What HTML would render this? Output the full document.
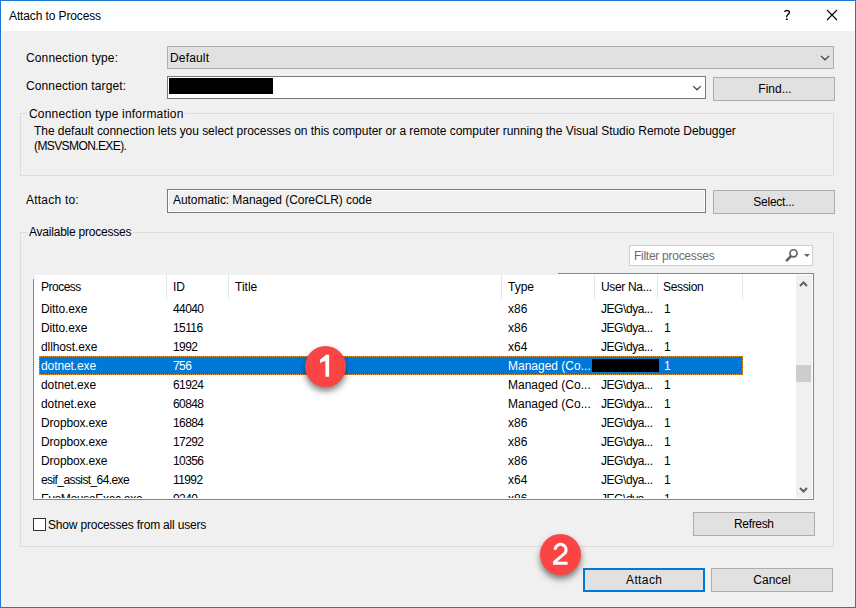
<!DOCTYPE html>
<html><head><meta charset="utf-8">
<style>
*{box-sizing:border-box;margin:0;padding:0}
html,body{width:856px;height:608px;overflow:hidden;background:#f0f0f0}
body{position:relative;font-family:"Liberation Sans",sans-serif;font-size:12px;color:#000}
.a{position:absolute}
.t{position:absolute;line-height:15px;white-space:nowrap}
</style></head><body>

<div class="a" style="left:0px;top:0px;width:856px;height:608px;background:#f0f0f0;border:1px solid #1a79d3"></div>
<div class="a" style="left:1px;top:1px;width:854px;height:30px;background:#fff"></div>
<div class="t" style="left:9px;top:9px;letter-spacing:-0.12px">Attach to Process</div>
<svg class="a" style="left:780px;top:6px" width="14" height="18" viewBox="0 0 14 18"><path d="M4.4 5.8C4.9 4.9 5.8 4.5 7 4.5C8.5 4.5 9.4 5.3 9.4 6.4C9.4 7.5 8.6 8.1 7.7 8.8C7 9.4 6.6 10 6.6 11.2" fill="none" stroke="#000" stroke-width="1.3"/><rect x="5.9" y="12.5" width="1.9" height="1.5" fill="#000"/></svg>
<svg class="a" style="left:826px;top:9px" width="12" height="12" viewBox="0 0 12 12"><path d="M1 1L11 11M11 1L1 11" stroke="#000" stroke-width="1.1"/></svg>
<div class="t" style="left:26px;top:51px;letter-spacing:0.13px">Connection type:</div>
<div class="a" style="left:167px;top:46px;width:667px;height:23px;background:#e1e1e1;border:1px solid #adadad"></div>
<div class="t" style="left:170px;top:51px;letter-spacing:0.17px">Default</div>
<svg class="a" style="left:815px;top:50px" width="20" height="14" viewBox="815 50 20 14"><path d="M820.9 55.9L825 59.8L829.1 55.9" fill="none" stroke="#404040" stroke-width="1.2"/></svg>
<div class="t" style="left:26px;top:79px;letter-spacing:0.12px">Connection target:</div>
<div class="a" style="left:167px;top:76px;width:539px;height:23px;background:#fff;border:1px solid #7a7a7a"></div>
<div class="a" style="left:169px;top:78px;width:104px;height:16px;background:#000"></div>
<svg class="a" style="left:688px;top:80px" width="18" height="14" viewBox="688 80 18 14"><path d="M693.2 86.1L697 89.8L700.8 86.1" fill="none" stroke="#404040" stroke-width="1.2"/></svg>
<div class="a" style="left:713px;top:77px;width:122px;height:24px;background:#e1e1e1;border:1px solid #adadad"></div><div class="t" style="left:714px;top:82px;width:122px;text-align:center">Find...</div>
<div class="a" style="left:20px;top:113px;width:814px;height:63px;border:1px solid #dcdcdc"></div>
<div class="a" style="left:27px;top:106px;width:158px;height:16px;background:#f0f0f0"></div>
<div class="t" style="left:29px;top:107px;letter-spacing:0.19px">Connection type information</div>
<div class="t" style="left:34px;top:124px;letter-spacing:-0.04px">The default connection lets you select processes on this computer or a remote computer running the Visual Studio Remote Debugger</div>
<div class="t" style="left:34px;top:139px;letter-spacing:-0.6px">(MSVSMON.EXE).</div>
<div class="t" style="left:26px;top:193px;letter-spacing:0.22px">Attach to:</div>
<div class="a" style="left:167px;top:189px;width:539px;height:24px;background:#f0f0f0;border:1px solid #7a7a7a;box-shadow:inset 0 0 0 1px #fff"></div>
<div class="t" style="left:173px;top:193px;letter-spacing:-0.06px">Automatic: Managed (CoreCLR) code</div>
<div class="a" style="left:713px;top:190px;width:122px;height:24px;background:#e1e1e1;border:1px solid #adadad"></div><div class="t" style="left:713px;top:195px;width:122px;text-align:center;letter-spacing:-0.25px;text-indent:-0.25px">Select...</div>
<div class="a" style="left:20px;top:232px;width:814px;height:315px;border:1px solid #dcdcdc"></div>
<div class="a" style="left:27px;top:224px;width:106px;height:17px;background:#f0f0f0"></div>
<div class="t" style="left:29px;top:225px;letter-spacing:-0.22px">Available processes</div>
<div class="a" style="left:629px;top:245px;width:184px;height:21px;background:#fff;border:1px solid #cccedb"></div>
<div class="t" style="left:634px;top:249px;letter-spacing:-0.27px;color:#6d6d6d">Filter processes</div>
<svg class="a" style="left:784px;top:247px" width="14" height="16" viewBox="0 0 14 16"><circle cx="9.5" cy="6.3" r="3.6" fill="none" stroke="#616161" stroke-width="1.6"/><path d="M7.2 8.8L2.1 14.1" stroke="#616161" stroke-width="2.5"/></svg>
<svg class="a" style="left:803px;top:253px" width="8" height="5" viewBox="0 0 8 5"><path d="M1 1H7L4 4Z" fill="#616161"/></svg>
<div class="a" style="left:34px;top:274px;width:779px;height:225px;background:#fff"></div>
<div class="a" style="left:558px;top:273px;width:256px;height:1px;background:#828790"></div>
<div class="a" style="left:813px;top:273px;width:1px;height:227px;background:#828790"></div>
<div class="a" style="left:33px;top:499px;width:781px;height:1px;background:#828790"></div>
<div class="a" style="left:33px;top:279px;width:1px;height:221px;background:#828790"></div>
<div class="a" style="left:33px;top:273px;width:525px;height:2px;background:#f0f0f0"></div>
<div class="a" style="left:33px;top:273px;width:2px;height:6px;background:#f0f0f0"></div>
<div class="a" style="left:34px;top:275px;width:778px;height:223px;overflow:hidden">
<div class="a" style="left:132px;top:0px;width:1px;height:24px;background:#e5e5e5"></div>
<div class="a" style="left:194px;top:0px;width:1px;height:24px;background:#e5e5e5"></div>
<div class="a" style="left:467px;top:0px;width:1px;height:24px;background:#e5e5e5"></div>
<div class="a" style="left:560px;top:0px;width:1px;height:24px;background:#e5e5e5"></div>
<div class="a" style="left:623px;top:0px;width:1px;height:24px;background:#e5e5e5"></div>
<div class="a" style="left:708px;top:0px;width:1px;height:24px;background:#e5e5e5"></div>
<div class="t" style="left:7px;top:5px;letter-spacing:-0.5px">Process</div>
<div class="t" style="left:139px;top:5px">ID</div>
<div class="t" style="left:201px;top:5px">Title</div>
<div class="t" style="left:474px;top:5px">Type</div>
<div class="t" style="left:567px;top:5px;letter-spacing:-0.33px">User Na...</div>
<div class="t" style="left:629px;top:5px;letter-spacing:-0.33px">Session</div>
<div class="a" style="left:5px;top:81px;width:704px;height:19px;background:#0078d7;border:1px dotted #ec9a3c"></div>
<div class="a" style="left:558px;top:84px;width:67px;height:13px;background:#000"></div>
<div class="t" style="left:7px;top:27px;letter-spacing:-0.12px">Ditto.exe</div>
<div class="t" style="left:139px;top:27px;letter-spacing:-0.6px">44040</div>
<div class="t" style="left:474px;top:27px">x86</div>
<div class="t" style="left:567px;top:27px;letter-spacing:-0.44px">JEG\dya...</div>
<div class="t" style="left:630px;top:27px">1</div>
<div class="t" style="left:7px;top:46px;letter-spacing:-0.12px">Ditto.exe</div>
<div class="t" style="left:139px;top:46px;letter-spacing:-0.6px">15116</div>
<div class="t" style="left:474px;top:46px">x86</div>
<div class="t" style="left:567px;top:46px;letter-spacing:-0.44px">JEG\dya...</div>
<div class="t" style="left:630px;top:46px">1</div>
<div class="t" style="left:7px;top:65px;letter-spacing:-0.1px">dllhost.exe</div>
<div class="t" style="left:139px;top:65px;letter-spacing:-0.6px">1992</div>
<div class="t" style="left:474px;top:65px">x64</div>
<div class="t" style="left:567px;top:65px;letter-spacing:-0.44px">JEG\dya...</div>
<div class="t" style="left:630px;top:65px">1</div>
<div class="t" style="left:7px;top:84px;letter-spacing:-0.1px;color:#fff">dotnet.exe</div>
<div class="t" style="left:139px;top:84px;letter-spacing:-0.6px;color:#fff">756</div>
<div class="t" style="left:474px;top:84px;color:#fff">Managed (Co...</div>
<div class="t" style="left:630px;top:84px;color:#fff">1</div>
<div class="t" style="left:7px;top:103px;letter-spacing:-0.1px">dotnet.exe</div>
<div class="t" style="left:139px;top:103px;letter-spacing:-0.6px">61924</div>
<div class="t" style="left:474px;top:103px">Managed (Co...</div>
<div class="t" style="left:567px;top:103px;letter-spacing:-0.44px">JEG\dya...</div>
<div class="t" style="left:630px;top:103px">1</div>
<div class="t" style="left:7px;top:122px;letter-spacing:-0.1px">dotnet.exe</div>
<div class="t" style="left:139px;top:122px;letter-spacing:-0.6px">60848</div>
<div class="t" style="left:474px;top:122px">Managed (Co...</div>
<div class="t" style="left:567px;top:122px;letter-spacing:-0.44px">JEG\dya...</div>
<div class="t" style="left:630px;top:122px">1</div>
<div class="t" style="left:7px;top:141px;letter-spacing:-0.15px">Dropbox.exe</div>
<div class="t" style="left:139px;top:141px;letter-spacing:-0.6px">16884</div>
<div class="t" style="left:474px;top:141px">x86</div>
<div class="t" style="left:567px;top:141px;letter-spacing:-0.44px">JEG\dya...</div>
<div class="t" style="left:630px;top:141px">1</div>
<div class="t" style="left:7px;top:160px;letter-spacing:-0.15px">Dropbox.exe</div>
<div class="t" style="left:139px;top:160px;letter-spacing:-0.6px">17292</div>
<div class="t" style="left:474px;top:160px">x86</div>
<div class="t" style="left:567px;top:160px;letter-spacing:-0.44px">JEG\dya...</div>
<div class="t" style="left:630px;top:160px">1</div>
<div class="t" style="left:7px;top:179px;letter-spacing:-0.15px">Dropbox.exe</div>
<div class="t" style="left:139px;top:179px;letter-spacing:-0.6px">10356</div>
<div class="t" style="left:474px;top:179px">x86</div>
<div class="t" style="left:567px;top:179px;letter-spacing:-0.44px">JEG\dya...</div>
<div class="t" style="left:630px;top:179px">1</div>
<div class="t" style="left:7px;top:198px;letter-spacing:-0.59px">esif_assist_64.exe</div>
<div class="t" style="left:139px;top:198px;letter-spacing:-0.6px">11992</div>
<div class="t" style="left:474px;top:198px">x64</div>
<div class="t" style="left:567px;top:198px;letter-spacing:-0.44px">JEG\dya...</div>
<div class="t" style="left:630px;top:198px">1</div>
<div class="t" style="left:7px;top:217px;letter-spacing:-0.3px">EvoMouseExec.exe</div>
<div class="t" style="left:139px;top:217px;letter-spacing:-0.6px">9240</div>
<div class="t" style="left:474px;top:217px">x86</div>
<div class="t" style="left:567px;top:217px;letter-spacing:-0.44px">JEG\dya...</div>
<div class="t" style="left:630px;top:217px">1</div>
<div class="a" style="left:762px;top:0px;width:16px;height:223px;background:#f0f0f0"></div>
<div class="a" style="left:762px;top:90px;width:15px;height:17px;background:#cdcdcd"></div>
<svg class="a" style="left:765px;top:5px" width="9" height="8" viewBox="0 0 9 8"><path d="M1 6L4.5 2.5L8 6" fill="none" stroke="#606060" stroke-width="2"/></svg>
<svg class="a" style="left:765px;top:211px" width="9" height="8" viewBox="0 0 9 8"><path d="M1 2L4.5 5.5L8 2" fill="none" stroke="#606060" stroke-width="2"/></svg>
</div>
<div class="a" style="left:33px;top:518px;width:13px;height:13px;background:#fff;border:1px solid #333"></div>
<div class="t" style="left:48px;top:518px;letter-spacing:-0.18px">Show processes from all users</div>
<div class="a" style="left:693px;top:512px;width:122px;height:24px;background:#e1e1e1;border:1px solid #adadad"></div><div class="t" style="left:693px;top:517px;width:122px;text-align:center;letter-spacing:-0.33px;text-indent:-0.33px">Refresh</div>
<div class="a" style="left:583px;top:568px;width:122px;height:24px;background:#e1e1e1;border:2px solid #0078d7"></div><div class="t" style="left:583px;top:573px;width:122px;text-align:center;letter-spacing:0.4px;text-indent:0.4px">Attach</div>
<div class="a" style="left:711px;top:568px;width:122px;height:24px;background:#e1e1e1;border:1px solid #adadad"></div><div class="t" style="left:711px;top:573px;width:122px;text-align:center">Cancel</div>
<div class="a" style="left:305px;top:346px;width:41px;height:41px;border-radius:50%;background:#fb4545;box-shadow:0 4px 6px rgba(0,0,0,.5)"></div>
<div class="a" style="left:540px;top:534px;width:41px;height:41px;border-radius:50%;background:#fb4545;box-shadow:0 4px 6px rgba(0,0,0,.5)"></div>
<svg class="a" style="left:0;top:0" width="856" height="608" viewBox="0 0 856 608">
<path d="M326 354.8H329.1V376.8H325.4V360.8L320 362.9V359.7Z" fill="#fff"/>
<path d="M555.15 549.8A5.45 5.45 0 1 1 564.1 553.97" fill="none" stroke="#fff" stroke-width="3.0"/>
<path d="M565.06 555.12L557.03 561.85H567.6V564.85H553.1V561.23L563.14 552.82Z" fill="#fff"/>
</svg>
</body></html>
